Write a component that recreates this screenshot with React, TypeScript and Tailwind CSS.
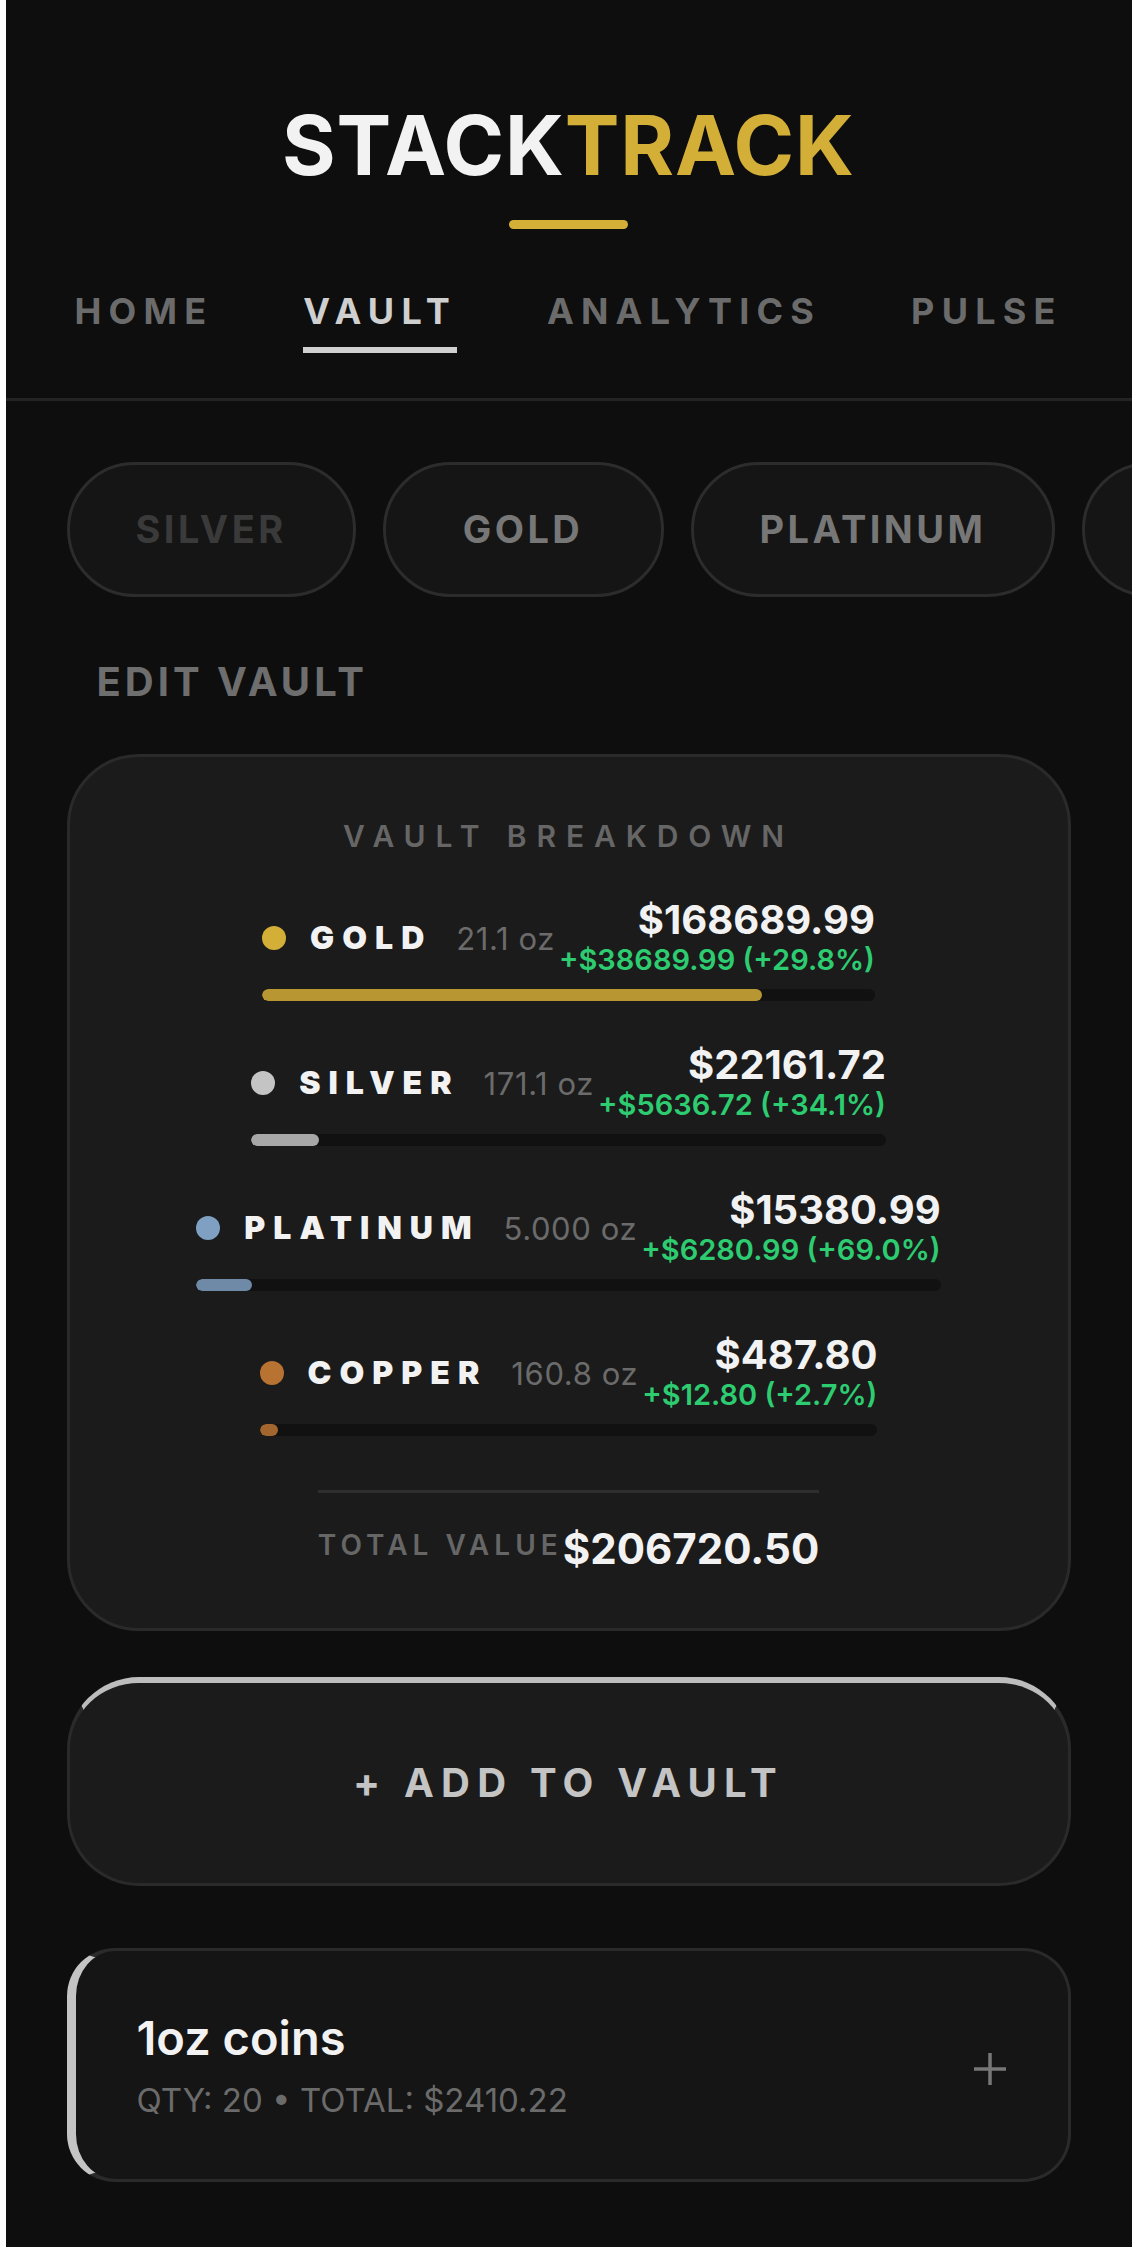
import React from 'react';

type Metal = {
  name: string;
  oz: string;
  value: number;
  gain: string;
  dot: string;
  fill: string;
};

const metals: Metal[] = [
  { name: 'GOLD', oz: '21.1 oz', value: 168689.99, gain: '+$38689.99 (+29.8%)', dot: 'bg-[#d4af37]', fill: 'bg-[#b89733]' },
  { name: 'SILVER', oz: '171.1 oz', value: 22161.72, gain: '+$5636.72 (+34.1%)', dot: 'bg-[#c4c4c4]', fill: 'bg-[#a8a8a8]' },
  { name: 'PLATINUM', oz: '5.000 oz', value: 15380.99, gain: '+$6280.99 (+69.0%)', dot: 'bg-[#7fa0c2]', fill: 'bg-[#6f8aa6]' },
  { name: 'COPPER', oz: '160.8 oz', value: 487.8, gain: '+$12.80 (+2.7%)', dot: 'bg-[#b87333]', fill: 'bg-[#a3662f]' },
];

const total = metals.reduce((s, m) => s + m.value, 0);

const tabs = ['HOME', 'VAULT', 'ANALYTICS', 'PULSE'];
const chips = ['SILVER', 'GOLD', 'PLATINUM', 'COPPER'];

const MetalRow: React.FC<{ metal: Metal }> = ({ metal }) => {
  const pct = (metal.value / total) * 100;
  return (
    <div className="mx-auto flex w-fit flex-col">
      <div className="flex items-center gap-[4px]">
        <div className="flex items-center gap-[24px]">
          <span className={`h-[24px] w-[24px] shrink-0 rounded-full ${metal.dot}`} />
          <span className="text-[32px] font-black leading-none tracking-[0.25em] text-[#f2f2f2]">{metal.name}</span>
          <span className="text-[31px] leading-none tracking-[0.02em] text-[#6b6b6b]">{metal.oz}</span>
        </div>
        <div className="ml-auto flex flex-col items-end">
          <span className="text-[40px] font-bold leading-[44px] text-[#f2f2f2]">${metal.value.toFixed(2)}</span>
          <span className="text-[29px] font-semibold leading-[36px] text-[#2ecc71]">{metal.gain}</span>
        </div>
      </div>
      <div className="mt-[11px] h-[12px] w-full overflow-hidden rounded-full bg-[#111111]">
        <div className={`h-full min-w-[18px] rounded-full ${metal.fill}`} style={{ width: `${pct}%` }} />
      </div>
    </div>
  );
};

export default function App() {
  return (
    <div className="min-h-screen bg-white font-['Inter',sans-serif]">
      <div className="mx-auto min-h-[2247px] w-[1126px] bg-[#0e0e0e]">
        {/* header */}
        <header className="flex flex-col items-center border-b-[3px] border-[#242424] pt-[105px] pb-[45px]">
          <h1 className="text-[82px] font-bold leading-none tracking-[0.01em]">
            <span className="text-[#f2f2f2]">STACK</span>
            <span className="text-[#d4af37]">TRACK</span>
          </h1>
          <div className="mt-[33px] h-[9px] w-[119px] rounded-full bg-[#d4af37]" />
          <nav className="mt-[64px] flex justify-center gap-[90px]">
            {tabs.map(t => (
              <span
                key={t}
                className={`border-b-[6px] pb-[18px] text-[36px] font-bold leading-none tracking-[0.2em] ${
                  t === 'VAULT' ? 'border-[#cfcfcf] text-[#cfcfcf]' : 'border-transparent text-[#6b6b6b]'
                }`}
              >
                {t}
              </span>
            ))}
          </nav>
        </header>

        {/* metal filter chips */}
        <div className="mt-[61px] flex gap-[27px] overflow-hidden pl-[61px]">
          {chips.map((c, i) => (
            <div
              key={c}
              className={`flex h-[135px] min-w-[281px] shrink-0 items-center justify-center rounded-full border-[3px] border-[#2c2c2c] bg-[#151515] px-[66px] text-[38px] font-bold tracking-[0.09em] ${
                i === 0 ? 'text-[#3a3a3a]' : 'text-[#777777]'
              }`}
            >
              {c}
            </div>
          ))}
        </div>

        <div className="px-[61px]">
          <h2 className="mt-[65px] pl-[30px] text-[40px] font-bold leading-none tracking-[0.1em] text-[#6e6e6e]">EDIT VAULT</h2>

          {/* breakdown card */}
          <section className="mt-[52px] rounded-[72px] border-[3px] border-[#2a2a2a] bg-[#1b1b1b] pt-[61px] pb-[56px]">
            <p className="text-center text-[30px] font-semibold leading-[36px] tracking-[0.33em] text-[#666666]">VAULT BREAKDOWN</p>
            <div className="mt-[44px] flex flex-col gap-[42px]">
              {metals.map(m => (
                <MetalRow key={m.name} metal={m} />
              ))}
            </div>
            <div className="mx-auto mt-[54px] w-fit">
              <div className="h-[3px] w-full bg-[#2e2e2e]" />
              <div className="flex items-start pt-[33px]">
                <span className="mt-[3px] text-[28px] font-semibold leading-[32px] tracking-[0.18em] text-[#666666]">TOTAL VALUE</span>
                <span className="text-[42px] font-bold leading-[46px] text-[#f2f2f2]">${total.toFixed(2)}</span>
              </div>
            </div>
          </section>

          {/* add button */}
          <button className="mt-[46px] flex h-[209px] w-full items-center justify-center rounded-[72px] border-[3px] border-t-[6px] border-[#2a2a2a] border-t-[#bdbdbd] bg-[#1b1b1b] text-[40px] font-bold tracking-[0.18em] text-[#c4c4c4]">
            + ADD TO VAULT
          </button>

          {/* holdings */}
          <div className="mt-[62px] flex h-[234px] items-center justify-between rounded-[48px] border-[3px] border-l-[9px] border-[#2a2a2a] border-l-[#c4c4c4] bg-[#151515] pr-[61px] pl-[61px]">
            <div className="flex flex-col">
              <span className="text-[47px] font-semibold leading-[56px] text-[#f2f2f2]">1oz coins</span>
              <span className="mt-[14px] text-[33px] leading-[40px] text-[#6b6b6b]">QTY: 20 • TOTAL: $2410.22</span>
            </div>
            <svg className="mt-[8px]" width="34" height="34" viewBox="0 0 34 34" fill="none" stroke="#777777" strokeWidth="3.5">
              <line x1="17" y1="1" x2="17" y2="33" />
              <line x1="1" y1="17" x2="33" y2="17" />
            </svg>
          </div>
        </div>
      </div>
    </div>
  );
}
